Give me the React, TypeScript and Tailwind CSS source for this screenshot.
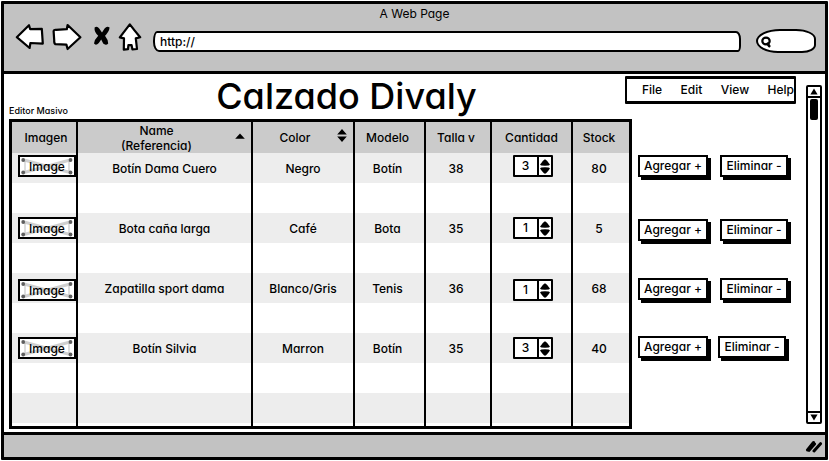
import { useState } from "react";

type Align = "align-top" | "align-middle" | "align-bottom";

interface Product {
  name: string;
  color: string;
  model: string;
  size: number;
  quantity: number;
  stock: number;
  align: Align;
}

const products: Product[] = [
  { name: "Botín Dama Cuero", color: "Negro", model: "Botín", size: 38, quantity: 3, stock: 80, align: "align-top" },
  { name: "Bota caña larga", color: "Café", model: "Bota", size: 35, quantity: 1, stock: 5, align: "align-middle" },
  { name: "Zapatilla sport dama", color: "Blanco/Gris", model: "Tenis", size: 36, quantity: 1, stock: 68, align: "align-bottom" },
  { name: "Botín Silvia", color: "Marron", model: "Botín", size: 35, quantity: 3, stock: 40, align: "align-middle" },
];

const actionRows = [
  { product: "Botín Dama Cuero", row: "h-16 gap-3" },
  { product: "Bota caña larga", row: "h-[59px] gap-3" },
  { product: "Zapatilla sport dama", row: "h-[58px] gap-3" },
  { product: "Botín Silvia", row: "h-[58px] gap-2.5" },
];

const outline = {
  fill: "#fff",
  stroke: "#000",
  strokeWidth: 2.2,
  strokeLinejoin: "round" as const,
  strokeLinecap: "round" as const,
};

function NavIcons() {
  return (
    <div className="flex h-7 self-start">
      <button aria-label="Back">
        <svg width="33" height="28" viewBox="15 23 33 28" {...outline}>
          <path d="M16.8 37.2 29 25.2 30.2 29.2 41.8 28.8 42.8 43.6 30.4 43 29.6 48Z" />
        </svg>
      </button>
      <button aria-label="Forward">
        <svg width="40" height="28" viewBox="48 23 40 28" {...outline}>
          <path d="M53.6 31Q54 29.5 56 29.8L66.8 29.2 67.6 25 80.4 37.2 67.6 49 66.4 44.6 55.4 44.2Q54 43.5 54.2 40Z" />
        </svg>
      </button>
      <button aria-label="Stop">
        <svg width="28" height="28" viewBox="88 23 28 28">
          <path
            d="M94.6 27.4Q97.2 25.4 99.2 28.6L102 32.6 104.6 28.4Q107 25.6 109.6 27.6 109.2 31.6 105 35.8 108 39.6 108.2 43.4 106 46 103.2 43.4L101.2 39.4 98.8 43Q96 46 94 43.6 94.4 39.6 98.2 35.8 94 31.6 94.6 27.4Z"
            fill="#000"
          />
        </svg>
      </button>
      <button aria-label="Home">
        <svg width="28" height="28" viewBox="116 23 28 28" {...outline}>
          <path d="M129.8 24.4Q134 30 140.2 37.2L135.8 38.4 137 49 132.4 49.4 131.6 45.2 128.4 45.2 128 49.2 123.8 49.6 124 38.4 119.8 37.4Z" />
        </svg>
      </button>
    </div>
  );
}

function BrowserHeader() {
  return (
    <header className="border-b-[3px] border-black bg-[#c2c2c2] pb-[18px]">
      <div className="text-center text-xs leading-[19px]">A Web Page</div>
      <div className="flex h-[30px] items-end pr-[9px] pl-[11px]">
        <NavIcons />
        <div className="ml-[9px] flex h-6 flex-1 items-center">
          <input
            aria-label="Address"
            defaultValue="http://"
            className="h-[21px] w-full rounded-[4px_5px_3px_6px/10px_8px_6px_10px] border-2 border-black bg-white px-[5px] text-xs font-medium outline-none"
          />
        </div>
        <label className="ml-[15px] flex h-6 w-[60px] items-center rounded-[24px_20px_14px_22px/12px_10px_8px_12px] border-2 border-black bg-white pl-0.5">
          <svg className="shrink-0" width="13" height="13" viewBox="0 0 13 13" fill="none" stroke="#000" strokeLinecap="round">
            <ellipse cx="6" cy="6" rx="3.7" ry="3.3" strokeWidth="2.2" />
            <path d="M7.6 8.8 9.2 11" strokeWidth="2.8" />
          </svg>
          <input aria-label="Search" className="w-full min-w-0 bg-transparent text-xs outline-none" />
        </label>
      </div>
    </header>
  );
}

function MenuBar() {
  return (
    <nav className="mt-0.5 h-[28px] w-[171px] rounded-[1px] border-x-2 border-y-[3px] border-black bg-white">
      <ul className="flex justify-between pl-[15px] text-xs leading-[21px] font-medium">
        {["File", "Edit", "View", "Help"].map((item) => (
          <li key={item}>
            <button>{item}</button>
          </li>
        ))}
      </ul>
    </nav>
  );
}

function ImageButton({ product }: { product: string }) {
  return (
    <button
      aria-label={`Image ${product}`}
      className="relative block h-[22px] w-full border-2 border-black bg-white text-xs leading-[17px] font-medium"
    >
      <svg className="absolute inset-0 h-full w-full" viewBox="0 0 54 18" preserveAspectRatio="none">
        <path d="M4 3 50 15.5M4 15.5 50 3" stroke="#d0d0d0" strokeWidth="3" />
        <path d="M5 4V15M49 4V15" stroke="#bdbdbd" strokeWidth="1" fill="none" />
        <g fill="#5e5e5e">
          <circle cx="3.2" cy="3" r="1.9" />
          <circle cx="50.5" cy="3" r="1.9" />
          <circle cx="3.2" cy="15.5" r="1.9" />
          <circle cx="50.5" cy="15.5" r="1.9" />
        </g>
      </svg>
      <span className="relative">Image</span>
    </button>
  );
}

function Stepper({ product, initial }: { product: string; initial: number }) {
  const [value, setValue] = useState(initial);
  return (
    <div className="mx-auto flex h-[22px] w-10 rounded-[1px] border-2 border-black bg-white">
      <input
        aria-label={`Cantidad ${product}`}
        inputMode="numeric"
        value={value}
        onChange={(e) => setValue(Number(e.target.value) || 0)}
        className="h-[18px] w-[22px] text-center text-xs leading-[18px] font-medium outline-none"
      />
      <div className="flex flex-1 flex-col items-center justify-center gap-px border-l-2 border-black">
        <button aria-label="Más" onClick={() => setValue(value + 1)}>
          <svg className="block" width="10" height="7" viewBox="0 0 10 7">
            <path d="M5 .2Q7 1.2 9.9 5.6 9.8 6.8 5 6.8.2 6.8.1 5.6 3 1.2 5 .2Z" />
          </svg>
        </button>
        <button aria-label="Menos" onClick={() => setValue(value - 1)}>
          <svg className="block" width="10" height="7" viewBox="0 0 10 7">
            <path d="M5 6.8Q7 5.8 9.9 1.4 9.8.2 5 .2.2.2.1 1.4 3 5.8 5 6.8Z" />
          </svg>
        </button>
      </div>
    </div>
  );
}

function SortHeader({ lines, both }: { lines: string[]; both?: boolean }) {
  return (
    <button className="flex w-full items-center pr-1.5">
      <span className="flex-1">
        {lines.map((line) => (
          <span key={line} className="block">
            {line}
          </span>
        ))}
      </span>
      {both ? (
        <svg className="mb-1" width="10" height="13" viewBox="0 0 10 13">
          <path d="M5 0 9.8 5.4H.2ZM5 13 9.8 7.4H.2Z" />
        </svg>
      ) : (
        <svg className="mb-1" width="10" height="6" viewBox="0 0 10 6">
          <path d="M5 .4 9.8 5.8H.2Z" />
        </svg>
      )}
    </button>
  );
}

const th = "border-r-2 border-black py-0 font-medium last:border-r-0";
const td = "border-r-2 border-black py-0 last:border-r-0";

function BlankRow({ className }: { className: string }) {
  return (
    <tr className={className}>
      {[0, 1, 2, 3, 4, 5, 6].map((n) => (
        <td key={n} className={td} />
      ))}
    </tr>
  );
}

function ProductRows({ product }: { product: Product }) {
  const media = `border-r-2 border-black py-0.5 ${product.align}`;
  return (
    <>
      <tr className="h-[30px] bg-[#ededed]">
        <td className={`${media} pl-1.5`}>
          <ImageButton product={product.name} />
        </td>
        <td className={td}>{product.name}</td>
        <td className={td}>{product.color}</td>
        <td className={`${td} pr-1`}>{product.model}</td>
        <td className={`${td} pr-1`}>{product.size}</td>
        <td className={`${media} pl-0.5`}>
          <Stepper product={product.name} initial={product.quantity} />
        </td>
        <td className={`${td} pr-1`}>{product.stock}</td>
      </tr>
      <BlankRow className="h-[30px]" />
    </>
  );
}

function ProductTable() {
  return (
    <div className="min-w-0 flex-1 border-[3px] border-black bg-white">
      <table className="w-full table-fixed border-separate border-spacing-0 text-center text-xs leading-[15px] font-medium">
        <colgroup>
          <col className="w-[66px]" />
          <col />
          <col className="w-[102px]" />
          <col className="w-[71px]" />
          <col className="w-[66px]" />
          <col className="w-[81px]" />
          <col className="w-14" />
        </colgroup>
        <thead>
          <tr className="h-[31px] bg-[#cbcbcb]">
            <th className={`${th} pl-1`}>Imagen</th>
            <th className={th}>
              <SortHeader lines={["Name", "(Referencia)"]} />
            </th>
            <th className={th}>
              <SortHeader lines={["Color"]} both />
            </th>
            <th className={`${th} pr-1`}>Modelo</th>
            <th className={`${th} pr-1`}>Talla v</th>
            <th className={th}>Cantidad</th>
            <th className={`${th} pr-1`}>Stock</th>
          </tr>
        </thead>
        <tbody>
          {products.map((product) => (
            <ProductRows key={product.name} product={product} />
          ))}
          <BlankRow className="h-[30px] bg-[#ededed]" />
          <BlankRow className="h-[3px]" />
        </tbody>
      </table>
    </div>
  );
}

const actionButton =
  "h-[22px] border-2 border-black bg-white text-xs leading-[18px] font-medium whitespace-nowrap shadow-[3px_3px_0_#000]";

function Actions() {
  return (
    <div className="w-[158px] pt-9">
      {actionRows.map(({ product, row }) => (
        <div key={product} className={`flex items-start ${row}`}>
          <button aria-label={`Agregar + ${product}`} className={`w-[70px] ${actionButton}`}>
            Agregar +
          </button>
          <button aria-label={`Eliminar - ${product}`} className={`w-[68px] ${actionButton}`}>
            Eliminar -
          </button>
        </div>
      ))}
    </div>
  );
}

function ScrollBar() {
  return (
    <div className="mt-[11px] mr-[3px] mb-2 ml-2.5 flex w-4 flex-col rounded-[2px] border-2 border-black bg-white">
      <button aria-label="Scroll up" className="flex h-[11px] items-center justify-center border-b-2 border-black">
        <svg width="8" height="7" viewBox="0 0 8 7">
          <path d="M4 .6 7.6 6.4H.4Z" />
        </svg>
      </button>
      <div className="flex-1 px-0.5 pt-px">
        <div className="h-[21px] rounded-[2px] bg-black" />
      </div>
      <button aria-label="Scroll down" className="flex h-[11px] items-center justify-center border-t-2 border-black">
        <svg width="8" height="7" viewBox="0 0 8 7">
          <path d="M4 6.4 7.6.6H.4Z" />
        </svg>
      </button>
    </div>
  );
}

export default function App() {
  return (
    <div className="bg-white p-px font-[Inter,'Noto_Sans',sans-serif] text-black [font-feature-settings:'cv11']">
      <div className="rounded-[1px] border-[3px] border-black bg-white">
        <BrowserHeader />
        <main className="flex">
          <div className="min-w-0 flex-1 pb-[3px] pl-[5px]">
            <div className="flex h-[45px]">
              <p className="self-end pb-0.5 text-[9px] leading-3 font-medium">Editor Masivo</p>
              <h1 className="flex-1 text-center text-4xl leading-[45px] font-medium">Calzado Divaly</h1>
              <MenuBar />
            </div>
            <div className="flex gap-1.5">
              <ProductTable />
              <Actions />
            </div>
          </div>
          <ScrollBar />
        </main>
        <footer className="flex h-[25px] items-center justify-end border-t-[3px] border-black bg-[#c2c2c2] pr-0.5">
          <svg width="18" height="14" viewBox="0 0 18 14" stroke="#000" strokeWidth="3" strokeLinecap="round">
            <path d="M2.5 11 8.5 3.5M4 11.3 9.5 5M9 12 15.5 4.7" />
          </svg>
        </footer>
      </div>
    </div>
  );
}
